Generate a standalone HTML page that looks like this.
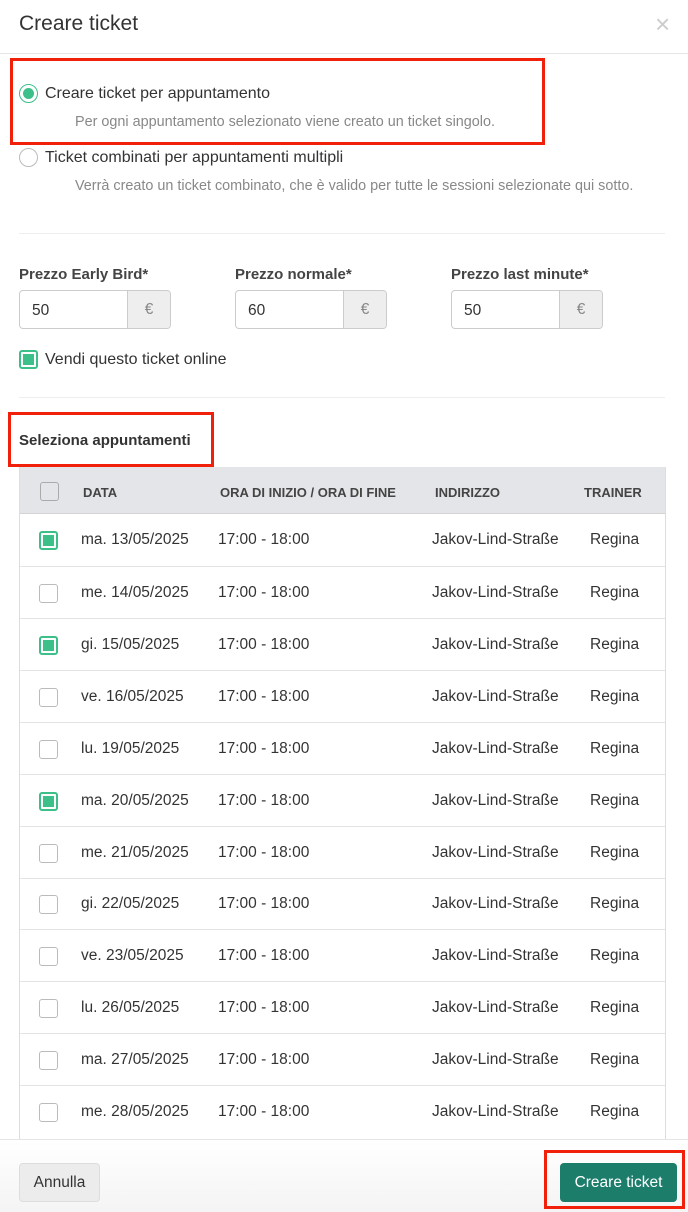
<!DOCTYPE html><html><head><style>
*{box-sizing:border-box;margin:0;padding:0}
body{width:688px;height:1212px;overflow:hidden;background:#fff;font-family:"Liberation Sans",sans-serif;color:#333;position:relative;font-size:15.5px}
.a{position:absolute}
.red{position:absolute;border:3px solid #f0200a}
.cb{position:absolute;width:19px;height:19px;border:1px solid #bbb;border-radius:3px;background:#fff}
.cb.on{border:2px solid #3dbf8a;background:#fff}
.cb.on:after{content:"";position:absolute;left:2px;top:2px;width:11px;height:11px;background:#3dbf8a}
.row{position:absolute;left:20px;width:645px;height:52px;border-top:1px solid #e4e4e4}
.row span{position:absolute;top:17px}
.inp{position:absolute;width:152px;height:39px;border:1px solid #ccc;border-radius:4px;overflow:hidden}
.inp b{font-weight:normal;position:absolute;left:12px;top:11px}
.inp i{font-style:normal;position:absolute;right:0;top:0;width:43px;height:100%;background:#eee;border-left:1px solid #ccc;color:#888;text-align:center;line-height:37px}
</style></head><body>
<div class="a" style="left:19px;top:12px;font-size:21px;color:#333">Creare ticket</div>
<div class="a" style="left:655px;top:9px;font-size:26px;color:#ccc">×</div>
<div class="a" style="left:0;top:53px;width:688px;height:1px;background:#e5e5e5"></div>
<div class="red" style="left:10px;top:58px;width:535px;height:87px"></div>
<div class="a" style="left:19px;top:84px;width:19px;height:19px;border:1px solid #3dbf8a;border-radius:50%"><div style="position:absolute;left:3px;top:3px;width:11px;height:11px;border-radius:50%;background:#3dbf8a"></div></div>
<div class="a" style="left:45px;top:85px;font-size:16px">Creare ticket per appuntamento</div>
<div class="a" style="left:75px;top:114px;font-size:14.4px;color:#888">Per ogni appuntamento selezionato viene creato un ticket singolo.</div>
<div class="a" style="left:19px;top:148px;width:19px;height:19px;border:1px solid #bbb;border-radius:50%"></div>
<div class="a" style="left:45px;top:149px;font-size:16px">Ticket combinati per appuntamenti multipli</div>
<div class="a" style="left:75px;top:178px;font-size:14.4px;color:#888">Verrà creato un ticket combinato, che è valido per tutte le sessioni selezionate qui sotto.</div>
<div class="a" style="left:19px;top:233px;width:646px;height:1px;background:#eee"></div>
<div class="a" style="left:19px;top:266px;font-weight:bold;color:#444;font-size:15px">Prezzo Early Bird*</div>
<div class="a" style="left:235px;top:266px;font-weight:bold;color:#444;font-size:15px">Prezzo normale*</div>
<div class="a" style="left:451px;top:266px;font-weight:bold;color:#444;font-size:15px">Prezzo last minute*</div>
<div class="inp" style="left:19px;top:290px"><b>50</b><i>€</i></div>
<div class="inp" style="left:235px;top:290px"><b>60</b><i>€</i></div>
<div class="inp" style="left:451px;top:290px"><b>50</b><i>€</i></div>
<div class="cb on" style="left:19px;top:350px"></div>
<div class="a" style="left:45px;top:351px;font-size:16px">Vendi questo ticket online</div>
<div class="a" style="left:19px;top:397px;width:646px;height:1px;background:#eee"></div>
<div class="red" style="left:8px;top:412px;width:206px;height:55px"></div>
<div class="a" style="left:19px;top:432px;font-weight:bold;color:#333;font-size:15px">Seleziona appuntamenti</div>
<div class="a" style="left:19px;top:467px;width:647px;height:680px;border:1px solid #ddd;border-bottom:none"></div>
<div class="a" style="left:20px;top:467px;width:645px;height:47px;background:#e4e5e8;border-bottom:1px solid #d4d4d4;font-size:13px;font-weight:bold;color:#444">
<div class="cb" style="left:20px;top:15px;background:#e4e5e8;border-color:#aaa"></div>
<span style="position:absolute;left:63px;top:18px">DATA</span>
<span style="position:absolute;left:200px;top:18px">ORA DI INIZIO / ORA DI FINE</span>
<span style="position:absolute;left:415px;top:18px">INDIRIZZO</span>
<span style="position:absolute;left:564px;top:18px">TRAINER</span></div>
<div class="row" style="top:514px;border-top:none"><div class="cb on" style="left:19px;top:17px"></div><span style="left:61px">ma. 13/05/2025</span><span style="left:198px">17:00 - 18:00</span><span style="left:412px">Jakov-Lind-Straße</span><span style="left:570px">Regina</span></div>
<div class="row" style="top:566px"><div class="cb" style="left:19px;top:17px"></div><span style="left:61px">me. 14/05/2025</span><span style="left:198px">17:00 - 18:00</span><span style="left:412px">Jakov-Lind-Straße</span><span style="left:570px">Regina</span></div>
<div class="row" style="top:618px"><div class="cb on" style="left:19px;top:17px"></div><span style="left:61px">gi. 15/05/2025</span><span style="left:198px">17:00 - 18:00</span><span style="left:412px">Jakov-Lind-Straße</span><span style="left:570px">Regina</span></div>
<div class="row" style="top:670px"><div class="cb" style="left:19px;top:17px"></div><span style="left:61px">ve. 16/05/2025</span><span style="left:198px">17:00 - 18:00</span><span style="left:412px">Jakov-Lind-Straße</span><span style="left:570px">Regina</span></div>
<div class="row" style="top:722px"><div class="cb" style="left:19px;top:17px"></div><span style="left:61px">lu. 19/05/2025</span><span style="left:198px">17:00 - 18:00</span><span style="left:412px">Jakov-Lind-Straße</span><span style="left:570px">Regina</span></div>
<div class="row" style="top:774px"><div class="cb on" style="left:19px;top:17px"></div><span style="left:61px">ma. 20/05/2025</span><span style="left:198px">17:00 - 18:00</span><span style="left:412px">Jakov-Lind-Straße</span><span style="left:570px">Regina</span></div>
<div class="row" style="top:826px"><div class="cb" style="left:19px;top:17px"></div><span style="left:61px">me. 21/05/2025</span><span style="left:198px">17:00 - 18:00</span><span style="left:412px">Jakov-Lind-Straße</span><span style="left:570px">Regina</span></div>
<div class="row" style="top:878px"><div class="cb" style="left:19px;top:16px"></div><span style="left:61px;top:16px">gi. 22/05/2025</span><span style="left:198px;top:16px">17:00 - 18:00</span><span style="left:412px;top:16px">Jakov-Lind-Straße</span><span style="left:570px;top:16px">Regina</span></div>
<div class="row" style="top:929px"><div class="cb" style="left:19px;top:17px"></div><span style="left:61px">ve. 23/05/2025</span><span style="left:198px">17:00 - 18:00</span><span style="left:412px">Jakov-Lind-Straße</span><span style="left:570px">Regina</span></div>
<div class="row" style="top:981px"><div class="cb" style="left:19px;top:17px"></div><span style="left:61px">lu. 26/05/2025</span><span style="left:198px">17:00 - 18:00</span><span style="left:412px">Jakov-Lind-Straße</span><span style="left:570px">Regina</span></div>
<div class="row" style="top:1033px"><div class="cb" style="left:19px;top:17px"></div><span style="left:61px">ma. 27/05/2025</span><span style="left:198px">17:00 - 18:00</span><span style="left:412px">Jakov-Lind-Straße</span><span style="left:570px">Regina</span></div>
<div class="row" style="top:1085px"><div class="cb" style="left:19px;top:17px"></div><span style="left:61px">me. 28/05/2025</span><span style="left:198px">17:00 - 18:00</span><span style="left:412px">Jakov-Lind-Straße</span><span style="left:570px">Regina</span></div>
<div class="a" style="left:0;top:1139px;width:688px;height:73px;background:linear-gradient(#fff,#f4f4f4);border-top:1px solid #e5e5e5"></div>
<div class="a" style="left:19px;top:1163px;width:81px;height:39px;background:#ececec;border:1px solid #ddd;border-radius:4px;text-align:center;line-height:37px;color:#333">Annulla</div>
<div class="red" style="left:544px;top:1150px;width:141px;height:59px"></div>
<div class="a" style="left:560px;top:1163px;width:117px;height:39px;background:#1c7d6b;border-radius:4px;color:#fff;text-align:center;line-height:39px">Creare ticket</div>
</body></html>
